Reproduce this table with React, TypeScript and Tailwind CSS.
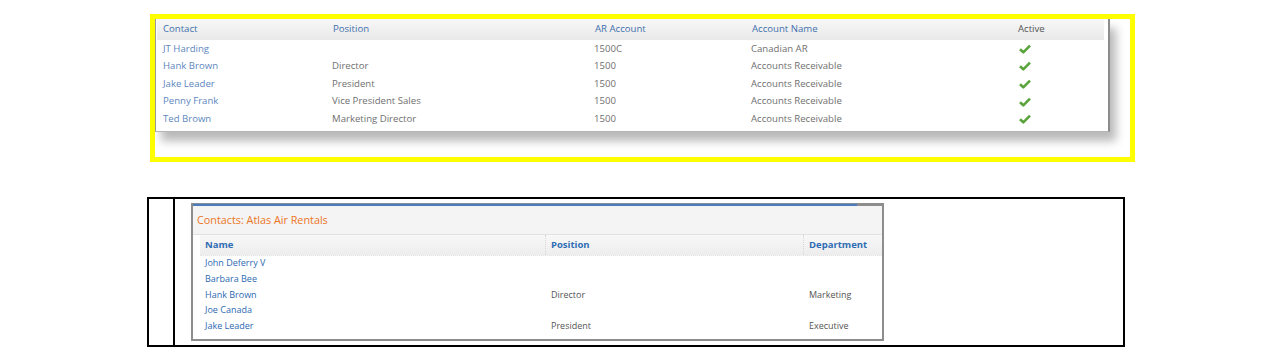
const arRows = [
  { contact: 'JT Harding', position: '', account: '1500C', name: 'Canadian AR' },
  { contact: 'Hank Brown', position: 'Director', account: '1500', name: 'Accounts Receivable' },
  { contact: 'Jake Leader', position: 'President', account: '1500', name: 'Accounts Receivable' },
  { contact: 'Penny Frank', position: 'Vice President Sales', account: '1500', name: 'Accounts Receivable' },
  { contact: 'Ted Brown', position: 'Marketing Director', account: '1500', name: 'Accounts Receivable' },
]

const contactRows = [
  { name: 'John Deferry V', position: '', dept: '', h: 'h-[14px]' },
  { name: 'Barbara Bee', position: '', dept: '', h: 'h-[17px]' },
  { name: 'Hank Brown', position: 'Director', dept: 'Marketing', h: 'h-[16px]' },
  { name: 'Joe Canada', position: '', dept: '', h: 'h-[14px]' },
  { name: 'Jake Leader', position: 'President', dept: 'Executive', h: 'h-[17px]' },
]

function Check() {
  return (
    <svg width="12" height="10" viewBox="0 0 12 10">
      <path d="M1 5.2 L4.3 8.3 L11 1.6" fill="none" stroke="#5ba33d" strokeWidth="2.6" strokeLinejoin="round" />
    </svg>
  )
}

export default function App() {
  return (
    <div className="w-[1267px] h-[360px] bg-white font-['Open_Sans',sans-serif] flex flex-col">
      {/*  Highlighted AR contacts grid  */}
      <div className="pt-[14px] pl-[150px]">
        <div className="w-[985px] h-[148px] border-[5px] border-[#ffff00]">
          <div className="w-[955px] h-[113px] bg-white border-l border-l-[#9a9a9a] border-r-2 border-r-[#8c8c8c] border-b border-b-[#b5b5b5] shadow-[6px_9px_9px_rgba(0,0,0,0.28)] pb-[4px]">
            <div className="grid grid-cols-[170px_262px_157px_268px_1fr] h-[21px] items-center mr-[4px] ml-[1px] bg-gradient-to-b from-[#f7f7f7] to-[#e9e9e9] text-[9.6px] text-[#3f70ae]">
              <div className="pl-[6px]">Contact</div>
              <div className="pl-[6px]">Position</div>
              <div className="pl-[6px]">AR Account</div>
              <div className="pl-[6px]">Account Name</div>
              <div className="pl-[4px] text-[#555]">Active</div>
            </div>
            {arRows.map((r) => (
              <div key={r.contact} className="grid grid-cols-[170px_262px_157px_268px_1fr] h-[17.6px] items-center text-[9.6px] text-[#707070]">
                <div className="pl-[7px] text-[#5d87c0]">{r.contact}</div>
                <div className="pl-[6px]">{r.position}</div>
                <div className="pl-[6px]">{r.account}</div>
                <div className="pl-[6px]">{r.name}</div>
                <div className="pl-[6px] flex items-center">
                  <Check />
                </div>
              </div>
            ))}
          </div>
        </div>
      </div>

      {/*  Framed screenshot of the contacts panel  */}
      <div className="mt-[35px] ml-[147px] w-[978px] h-[150px] border-2 border-black flex">
        <div className="w-[26px] border-r-2 border-black" />
        <div className="flex-1 pt-[4px] pl-[16px]">
          <div className="w-[693px] h-[138px] border-2 border-t-0 border-[#8d8d8d] bg-white flex flex-col">
            <div className="flex h-[3px]">
              <div className="w-[664px] border-t border-[#7d8ea3] bg-[#4d7db8]" />
              <div className="flex-1 bg-[#8d8d8d]" />
            </div>
            <div className="h-[29px] bg-[#f4f4f4] border-b border-[#e2e2e2] flex items-center pl-[4px] text-[10.8px] text-[#ec7424]">
              Contacts: Atlas Air Rentals
            </div>
            <div className="grid grid-cols-[345px_258px_1fr] h-[21px] items-center ml-[7px] bg-gradient-to-b from-[#f8f8f8] to-[#ededed] text-[9.5px] font-bold text-[#2f6db4] border-b border-dotted border-[#e4e4e4]">
              <div className="pl-[5px]">Name</div>
              <div className="pl-[5px] h-full flex items-center border-l border-dotted border-[#d6d6d6]">Position</div>
              <div className="pl-[5px] h-full flex items-center border-l border-dotted border-[#d6d6d6]">Department</div>
            </div>
            {contactRows.map((r) => (
              <div key={r.name} className={`grid grid-cols-[345px_258px_1fr] ${r.h} items-center ml-[7px] text-[9px] text-[#555]`}>
                <div className="pl-[5px] text-[#2d6ab3]">{r.name}</div>
                <div className="pl-[6px]">{r.position}</div>
                <div className="pl-[6px]">{r.dept}</div>
              </div>
            ))}
          </div>
        </div>
      </div>
    </div>
  )
}
